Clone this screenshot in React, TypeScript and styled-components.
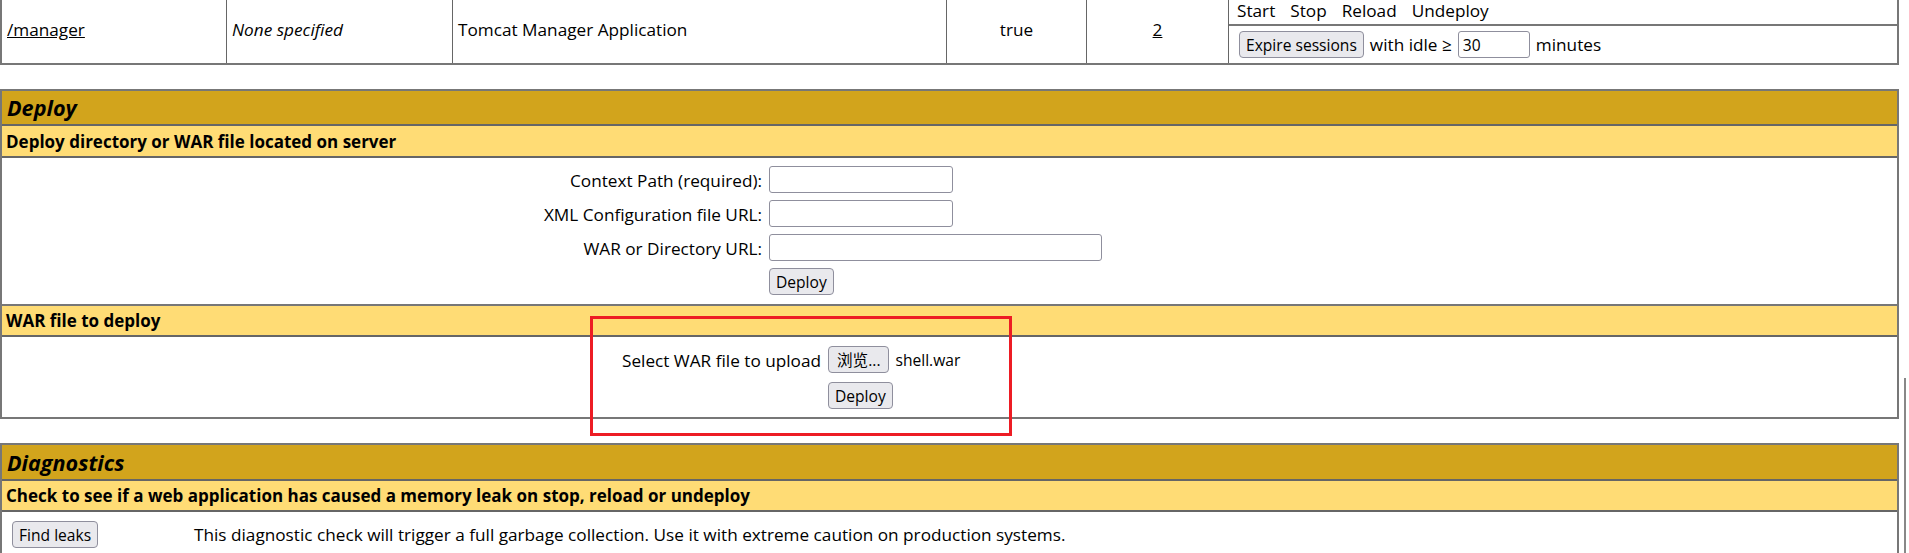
import React from 'react'
import styled, { createGlobalStyle } from 'styled-components'

const GlobalStyle = createGlobalStyle`
  html, body {
    margin: 0;
    background: #fff;
    overflow: hidden;
  }
  body {
    font-family: 'Open Sans', 'Noto Sans CJK SC', sans-serif;
    font-size: 17.2px;
    color: #000;
  }
  * {
    box-sizing: border-box;
  }
`

const App = () => {
  return (
    <Page>
      <GlobalStyle />
      <AppTable>
        <AppCell>
          <Link>/manager</Link>
        </AppCell>
        <AppCell>
          <em>None specified</em>
        </AppCell>
        <AppCell>Tomcat Manager Application</AppCell>
        <AppCell center>true</AppCell>
        <AppCell center>
          <Link>2</Link>
        </AppCell>
        <Commands>
          <CommandRow>
            <span>Start</span>
            <span>Stop</span>
            <span>Reload</span>
            <span>Undeploy</span>
          </CommandRow>
          <ExpireRow>
            <Button type="button">Expire sessions</Button>
            <span>with idle ≥</span>
            <TextInput width={72} defaultValue="30" />
            <span>minutes</span>
          </ExpireRow>
        </Commands>
      </AppTable>

      <Panel>
        <Title>Deploy</Title>
        <SubTitle>Deploy directory or WAR file located on server</SubTitle>
        <DeployForm>
          <Label>Context Path (required):</Label>
          <TextInput width={184} />
          <Label>XML Configuration file URL:</Label>
          <TextInput width={184} />
          <Label>WAR or Directory URL:</Label>
          <TextInput width={333} />
          <span />
          <div>
            <Button type="button">Deploy</Button>
          </div>
        </DeployForm>
        <SubTitle divided height={33}>
          WAR file to deploy
        </SubTitle>
        <UploadForm>
          <Label>Select WAR file to upload</Label>
          <FileRow>
            <FileButton type="button">浏览...</FileButton>
            <FileName>shell.war</FileName>
          </FileRow>
          <span />
          <div>
            <Button type="button">Deploy</Button>
          </div>
        </UploadForm>
      </Panel>

      <Panel>
        <Title height={36}>Diagnostics</Title>
        <SubTitle height={31}>
          Check to see if a web application has caused a memory leak on stop,
          reload or undeploy
        </SubTitle>
        <DiagnosticRow>
          <Button type="button">Find leaks</Button>
          <span>
            This diagnostic check will trigger a full garbage collection. Use it
            with extreme caution on production systems.
          </span>
        </DiagnosticRow>
      </Panel>

      <Highlight />
      <ScrollThumb />
    </Page>
  )
}

const Page = styled.div`
  position: relative;
  width: 1909px;
  height: 553px;
  padding-right: 10px;
  overflow: hidden;
`

const AppTable = styled.div`
  display: grid;
  grid-template-columns: 225px 226px 494px 140px 142px 1fr;
  height: 65px;
  border: 2px solid #777;
  border-top: 0;
`

const AppCell = styled.div<{ center?: boolean }>`
  display: flex;
  align-items: center;
  justify-content: ${p => (p.center ? 'center' : 'flex-start')};
  padding: 0 5px 5px;
  border-right: 1px solid #666;
`

const Link = styled.span`
  text-decoration: underline;
`

const Commands = styled.div`
  display: flex;
  flex-direction: column;
`

const CommandRow = styled.div`
  display: flex;
  gap: 15px;
  height: 26px;
  padding: 0 0 3px 8px;
  align-items: center;
  border-bottom: 2px solid #777;
`

const ExpireRow = styled.div`
  display: flex;
  align-items: flex-start;
  gap: 6px;
  padding: 5px 0 0 10px;

  & > span {
    line-height: 27px;
  }
`

const Button = styled.button`
  height: 27px;
  padding: 0 6px;
  border: 1px solid #8f8f9d;
  border-radius: 4px;
  background: #e9e9ed;
  color: #000;
  font: inherit;
  font-size: 15.6px;
  white-space: nowrap;
`

const FileButton = styled(Button)`
  padding: 0 8px;
`

const TextInput = styled.input<{ width: number }>`
  width: ${p => p.width}px;
  height: 27px;
  padding: 0 4px;
  border: 1px solid #8f8f9d;
  border-radius: 3px;
  background: #fff;
  color: #000;
  font: inherit;
  font-size: 15.6px;
`

const Panel = styled.section`
  margin-top: 24px;
  border: 2px solid #777;
`

const Title = styled.div<{ height?: number }>`
  height: ${p => p.height ?? 35}px;
  padding: 0 5px;
  display: flex;
  align-items: center;
  background: #d2a41c;
  border-bottom: 2px solid #666;
  font-size: 21.6px;
  font-weight: 700;
  font-style: italic;
`

const SubTitle = styled.div<{ divided?: boolean; height?: number }>`
  height: ${p => p.height ?? 32}px;
  padding: 0 4px;
  display: flex;
  align-items: center;
  background: #ffdc75;
  border-top: ${p => (p.divided ? '2px solid #777' : '0')};
  border-bottom: 2px solid #666;
  font-size: 17px;
  font-weight: 700;
`

const DeployForm = styled.div`
  display: grid;
  grid-template-columns: 760px 1fr;
  column-gap: 7px;
  row-gap: 7px;
  padding: 8px 0 9px;
`

const UploadForm = styled(DeployForm)`
  grid-template-columns: 819px 1fr;
  row-gap: 9px;
  padding: 9px 0 8px;
`

const Label = styled.div`
  height: 27px;
  line-height: 29px;
  text-align: right;
`

const FileRow = styled.div`
  display: flex;
  align-items: center;
  gap: 6px;
`

const FileName = styled.span`
  font-size: 15.6px;
`

const DiagnosticRow = styled.div`
  display: grid;
  grid-template-columns: 182px 1fr;
  align-items: center;
  justify-items: start;
  padding: 9px 0 40px 10px;
`

const Highlight = styled.div`
  position: absolute;
  left: 590px;
  top: 316px;
  width: 422px;
  height: 120px;
  border: 3px solid #ed1c24;
`

const ScrollThumb = styled.div`
  position: absolute;
  left: 1904px;
  top: 378px;
  width: 2px;
  bottom: 0;
  background: #888;
`

export default App
